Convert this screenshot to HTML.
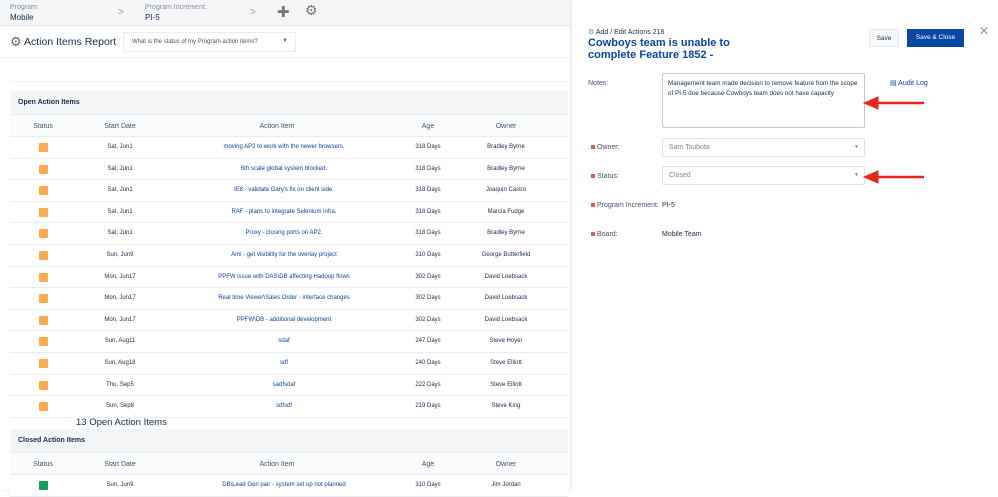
<!DOCTYPE html>
<html><head><style>
*{margin:0;padding:0;box-sizing:border-box}
body{width:998px;height:489px;overflow:hidden;font-family:"Liberation Sans",sans-serif;background:#fff;position:relative;color:#172b4d}
.top{position:absolute;left:0;top:0;width:570px;height:26px;background:#f4f5f7;border-bottom:1px solid #e4e6ea}
.lbl{position:absolute;font-size:7px;color:#8a8f99}
.val{position:absolute;font-size:8px;color:#172b4d}
.left{position:absolute;left:0;top:0;width:570px;height:489px;box-shadow:2px 0 6px rgba(0,0,0,.12)}
.band{position:absolute;left:10px;width:558px;background:#f4f5f7}
.hdr{position:absolute;left:10px;width:558px;height:23px;background:#fafbfc;border-top:1px solid #ebecf0;border-bottom:1px solid #ebecf0;font-size:7px;color:#42526e}
.hdr span,.row span{position:absolute;transform:translateX(-50%);white-space:nowrap}
.row{position:absolute;left:10px;width:558px;height:21.6px;border-bottom:1px solid #ebecf0;font-size:6px;color:#172b4d;background:#fff}
.row span{top:7px}
.row a{color:#0747a6;text-decoration:none}
.sq{position:absolute;left:29px;top:6px;width:9px;height:9px;border-radius:1px;background:#ffab4a}
.right{position:absolute;left:572px;top:0;width:426px;height:489px;background:#fff}
.fl{position:absolute;font-size:7px;color:#42526e}
.fl b{display:inline-block;width:4px;height:4px;background:#f0525a;margin-right:2px;vertical-align:middle}
.box{position:absolute;border:1px solid #dfe1e6;border-radius:2px;background:#fff;font-size:7px;color:#7a869a}
</style></head><body>
<div class="left">
<div class="top">
<div class="lbl" style="left:10px;top:4px">Program:</div>
<div class="val" style="left:10px;top:13px">Mobile</div>
<div class="lbl" style="left:145px;top:4px">Program Increment:</div>
<div class="val" style="left:145px;top:13px">PI-5</div>
<div style="position:absolute;left:118px;top:7px;font-size:10px;color:#999">&gt;</div>
<div style="position:absolute;left:250px;top:7px;font-size:10px;color:#999">&gt;</div>
<div style="position:absolute;left:277px;top:3px;font-size:15px;color:#777">✚</div>
<div style="position:absolute;left:305px;top:2px;font-size:14px;color:#777">⚙</div>
</div>
<div style="position:absolute;left:10px;top:34px;font-size:13px;color:#666">⚙</div>
<div style="position:absolute;left:24px;top:36px;font-size:10.5px;color:#172b4d">Action Items Report</div>
<div class="box" style="left:123px;top:32px;width:173px;height:20px;border-color:#ebecf0"><span style="position:absolute;left:8px;top:6px;font-size:6px;color:#42526e">What is the status of my Program action items?</span><span style="position:absolute;right:7px;top:5px;font-size:6px;color:#666">▼</span></div>
<div style="position:absolute;left:0;top:57px;width:570px;height:1px;background:#f0f0f0"></div>
<div style="position:absolute;left:10px;top:81px;width:558px;height:1px;background:#f0f1f3"></div>
<div class="band" style="top:91px;height:23px"><span style="position:absolute;left:8px;top:8px;font-size:7px;font-weight:bold">Open Action Items</span></div>
<div class="hdr" style="top:114px"><span style="left:33px;top:8px">Status</span><span style="left:110px;top:8px">Start Date</span><span style="left:267px;top:8px">Action Item</span><span style="left:418px;top:8px">Age</span><span style="left:496px;top:8px">Owner</span></div>
<div id="rows"></div>
<div style="position:absolute;left:76px;top:417px;font-size:9.5px;color:#172b4d">13 Open Action Items</div>
<div class="band" style="top:429px;height:23px"><span style="position:absolute;left:8px;top:8px;font-size:7px;font-weight:bold">Closed Action Items</span></div>
<div class="hdr" style="top:452px"><span style="left:33px;top:8px">Status</span><span style="left:110px;top:8px">Start Date</span><span style="left:267px;top:8px">Action Item</span><span style="left:418px;top:8px">Age</span><span style="left:496px;top:8px">Owner</span></div>
<div class="row" style="top:475px"><div class="sq" style="background:#14a05a"></div><span style="left:110px">Sun, Jun9</span><span style="left:274px"><a>DB\Lead Gen pair - system set up not planned</a></span><span style="left:418px">310 Days</span><span style="left:496px">Jim Jordan</span></div>
</div>
<div class="right">
<div style="position:absolute;left:16px;top:28px;font-size:7px;color:#172b4d"><span style="color:#888">⚙</span> Add / Edit Actions 218</div>
<div style="position:absolute;left:16px;top:37px;font-size:11px;font-weight:bold;color:#0747a6;line-height:12px;width:160px">Cowboys team is unable to complete Feature 1852 -</div>
<div style="position:absolute;left:297px;top:29px;width:30px;height:18px;border:1px solid #e4e6ea;background:#f7f8f9;font-size:6.5px;text-align:center;line-height:17px">Save</div>
<div style="position:absolute;left:335px;top:29px;width:57px;height:18px;background:#0747a6;color:#fff;font-size:6.5px;text-align:center;line-height:18px">Save &amp; Close</div>
<div style="position:absolute;left:407px;top:24px;font-size:12px;color:#999">✕</div>
<div class="fl" style="left:16px;top:80px">Notes:</div>
<div class="box" style="left:90px;top:73px;width:203px;height:55px;border-color:#c1c7d0;color:#172b4d;padding:5px;line-height:10px;font-size:6.3px">Management team made decision to remove feature from the scope of PI-5 due because Cowboys team does not have capacity</div>
<div style="position:absolute;left:318px;top:79px;font-size:7px;color:#0747a6">▤ Audit Log</div>
<div class="fl" style="left:19px;top:144px"><b></b>Owner:</div>
<div class="box" style="left:90px;top:138px;width:203px;height:19px"><span style="position:absolute;left:6px;top:5px">Sam Tsubota</span><span style="position:absolute;right:5px;top:5px;font-size:5px">▼</span></div>
<div class="fl" style="left:19px;top:173px"><b></b>Status:</div>
<div class="box" style="left:90px;top:166px;width:203px;height:19px"><span style="position:absolute;left:6px;top:5px">Closed</span><span style="position:absolute;right:5px;top:5px;font-size:5px">▼</span></div>
<div class="fl" style="left:19px;top:202px"><b></b>Program Increment:</div>
<div class="fl" style="left:90px;top:202px;color:#172b4d">PI-5</div>
<div class="fl" style="left:19px;top:231px"><b></b>Board:</div>
<div class="fl" style="left:90px;top:231px;color:#172b4d">Mobile Team</div>
<svg style="position:absolute;left:290px;top:93px" width="66" height="100"><g fill="#e8271a" stroke="#e8271a"><line x1="12" y1="10" x2="62" y2="10" stroke-width="2.5"/><polygon points="2,10 16,4 16,16"/><line x1="12" y1="84" x2="62" y2="84" stroke-width="2.5"/><polygon points="2,84 16,78 16,90"/></g></svg>
</div>
<script>
var d=[["Sat, Jun1","moving AP2 to work with the newer browsers.","318 Days","Bradley Byrne"],["Sat, Jun1","5th scale global system blocked.","318 Days","Bradley Byrne"],["Sat, Jun1","IE8 - validate Gary's fix on client side.","318 Days","Joaquin Castro"],["Sat, Jun1","RAF - plans to integrate Selenium infra.","318 Days","Marcia Fudge"],["Sat, Jun1","Proxy - closing ports on AP2.","318 Days","Bradley Byrne"],["Sun, Jun9","Ami - get visibility for the overlay project","310 Days","George Butterfield"],["Mon, Jun17","PPFW issue with DAS\\DB affecting Hadoop flows","302 Days","David Loebsack"],["Mon, Jun17","Real time Viewer\\Sales Order - interface changes","302 Days","David Loebsack"],["Mon, Jun17","PPFW\\DB - additional development","302 Days","David Loebsack"],["Sun, Aug11","sdaf","247 Days","Steve Hoyer"],["Sun, Aug18","sdf","240 Days","Steve Elliott"],["Thu, Sep5","sadfsdaf","222 Days","Steve Elliott"],["Sun, Sep8","sdfsdf","219 Days","Steve King"]];
var h="";d.forEach(function(r,i){h+='<div class="row" style="top:'+(137+i*21.6)+'px"><div class="sq"></div><span style="left:110px">'+r[0]+'</span><span style="left:274px"><a>'+r[1]+'</a></span><span style="left:418px">'+r[2]+'</span><span style="left:496px">'+r[3]+'</span></div>';});
document.getElementById("rows").outerHTML=h;
</script>
</body></html>
